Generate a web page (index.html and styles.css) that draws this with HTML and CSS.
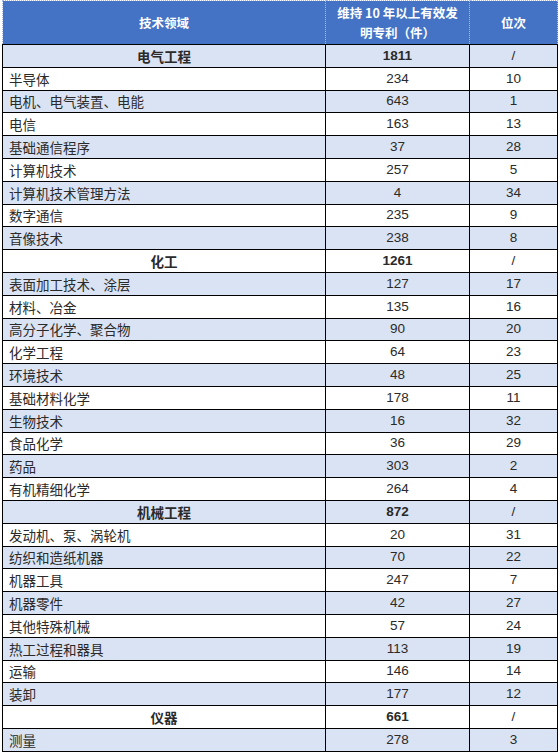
FILE: index.html
```html
<!DOCTYPE html>
<html lang="zh">
<head>
<meta charset="utf-8">
<link rel="stylesheet" href="styles.css">
</head>
<body>
<table class="tbl">
  <colgroup>
    <col class="c1"><col class="c2"><col class="c3">
  </colgroup>
  <thead>
    <tr class="head">
      <th>技术领域</th>
      <th>维持 10 年以上有效发<br>明专利（件）</th>
      <th>位次</th>
    </tr>
  </thead>
  <tbody>
    <tr class="sec alt"><td class="name">电气工程</td><td>1811</td><td class="slash">/</td></tr>
    <tr><td class="name">半导体</td><td>234</td><td>10</td></tr>
    <tr class="alt"><td class="name">电机、电气装置、电能</td><td>643</td><td>1</td></tr>
    <tr><td class="name">电信</td><td>163</td><td>13</td></tr>
    <tr class="alt"><td class="name">基础通信程序</td><td>37</td><td>28</td></tr>
    <tr><td class="name">计算机技术</td><td>257</td><td>5</td></tr>
    <tr class="alt"><td class="name">计算机技术管理方法</td><td>4</td><td>34</td></tr>
    <tr><td class="name">数字通信</td><td>235</td><td>9</td></tr>
    <tr class="alt"><td class="name">音像技术</td><td>238</td><td>8</td></tr>
    <tr class="sec"><td class="name">化工</td><td>1261</td><td class="slash">/</td></tr>
    <tr class="alt"><td class="name">表面加工技术、涂层</td><td>127</td><td>17</td></tr>
    <tr><td class="name">材料、冶金</td><td>135</td><td>16</td></tr>
    <tr class="alt"><td class="name">高分子化学、聚合物</td><td>90</td><td>20</td></tr>
    <tr><td class="name">化学工程</td><td>64</td><td>23</td></tr>
    <tr class="alt"><td class="name">环境技术</td><td>48</td><td>25</td></tr>
    <tr><td class="name">基础材料化学</td><td>178</td><td>11</td></tr>
    <tr class="alt"><td class="name">生物技术</td><td>16</td><td>32</td></tr>
    <tr><td class="name">食品化学</td><td>36</td><td>29</td></tr>
    <tr class="alt"><td class="name">药品</td><td>303</td><td>2</td></tr>
    <tr><td class="name">有机精细化学</td><td>264</td><td>4</td></tr>
    <tr class="sec alt"><td class="name">机械工程</td><td>872</td><td class="slash">/</td></tr>
    <tr><td class="name">发动机、泵、涡轮机</td><td>20</td><td>31</td></tr>
    <tr class="alt"><td class="name">纺织和造纸机器</td><td>70</td><td>22</td></tr>
    <tr><td class="name">机器工具</td><td>247</td><td>7</td></tr>
    <tr class="alt"><td class="name">机器零件</td><td>42</td><td>27</td></tr>
    <tr><td class="name">其他特殊机械</td><td>57</td><td>24</td></tr>
    <tr class="alt"><td class="name">热工过程和器具</td><td>113</td><td>19</td></tr>
    <tr><td class="name">运输</td><td>146</td><td>14</td></tr>
    <tr class="alt"><td class="name">装卸</td><td>177</td><td>12</td></tr>
    <tr class="sec"><td class="name">仪器</td><td>661</td><td class="slash">/</td></tr>
    <tr class="alt"><td class="name">测量</td><td>278</td><td>3</td></tr>
  </tbody>
</table>
</body>
</html>
```

FILE: styles.css
```css
html, body {
  margin: 0;
  padding: 0;
  background: #ffffff;
}
body {
  padding: 0 3px 0 2px;
  font-family: "Liberation Sans", "Noto Sans CJK SC", sans-serif;
  color: #2a2a2a;
}
.tbl {
  width: 555px;
  border-collapse: collapse;
  table-layout: fixed;
  font-size: 13.5px;
}
.c1 { width: 323px; }
.c2 { width: 144px; }
.c3 { width: 88px; }
.head th {
  background: #4472c4;
  color: #ffffff;
  font-family: "Noto Sans CJK SC", sans-serif;
  font-weight: 700;
  font-size: 12.5px;
  line-height: 20px;
  height: 43px;
  padding: 0;
  text-align: center;
  border: 1px dotted #a9bde6;
  border-bottom: 1px solid #000;
}
.tbl td {
  border: 1px solid #000;
  height: 21.8px;
  padding: 0;
  text-align: center;
  line-height: 20px;
  background: #ffffff;
}
.tbl td.name {
  text-align: left;
  padding-left: 6px;
  font-family: "Noto Sans CJK SC", sans-serif;
}
.tbl tr.alt td {
  background: #dae3f3;
}
.tbl tr.sec td {
  font-weight: 700;
}
.tbl tr.sec td.slash {
  font-weight: 400;
}
.tbl tr.sec td.name {
  text-align: center;
  padding-left: 0;
}
```
